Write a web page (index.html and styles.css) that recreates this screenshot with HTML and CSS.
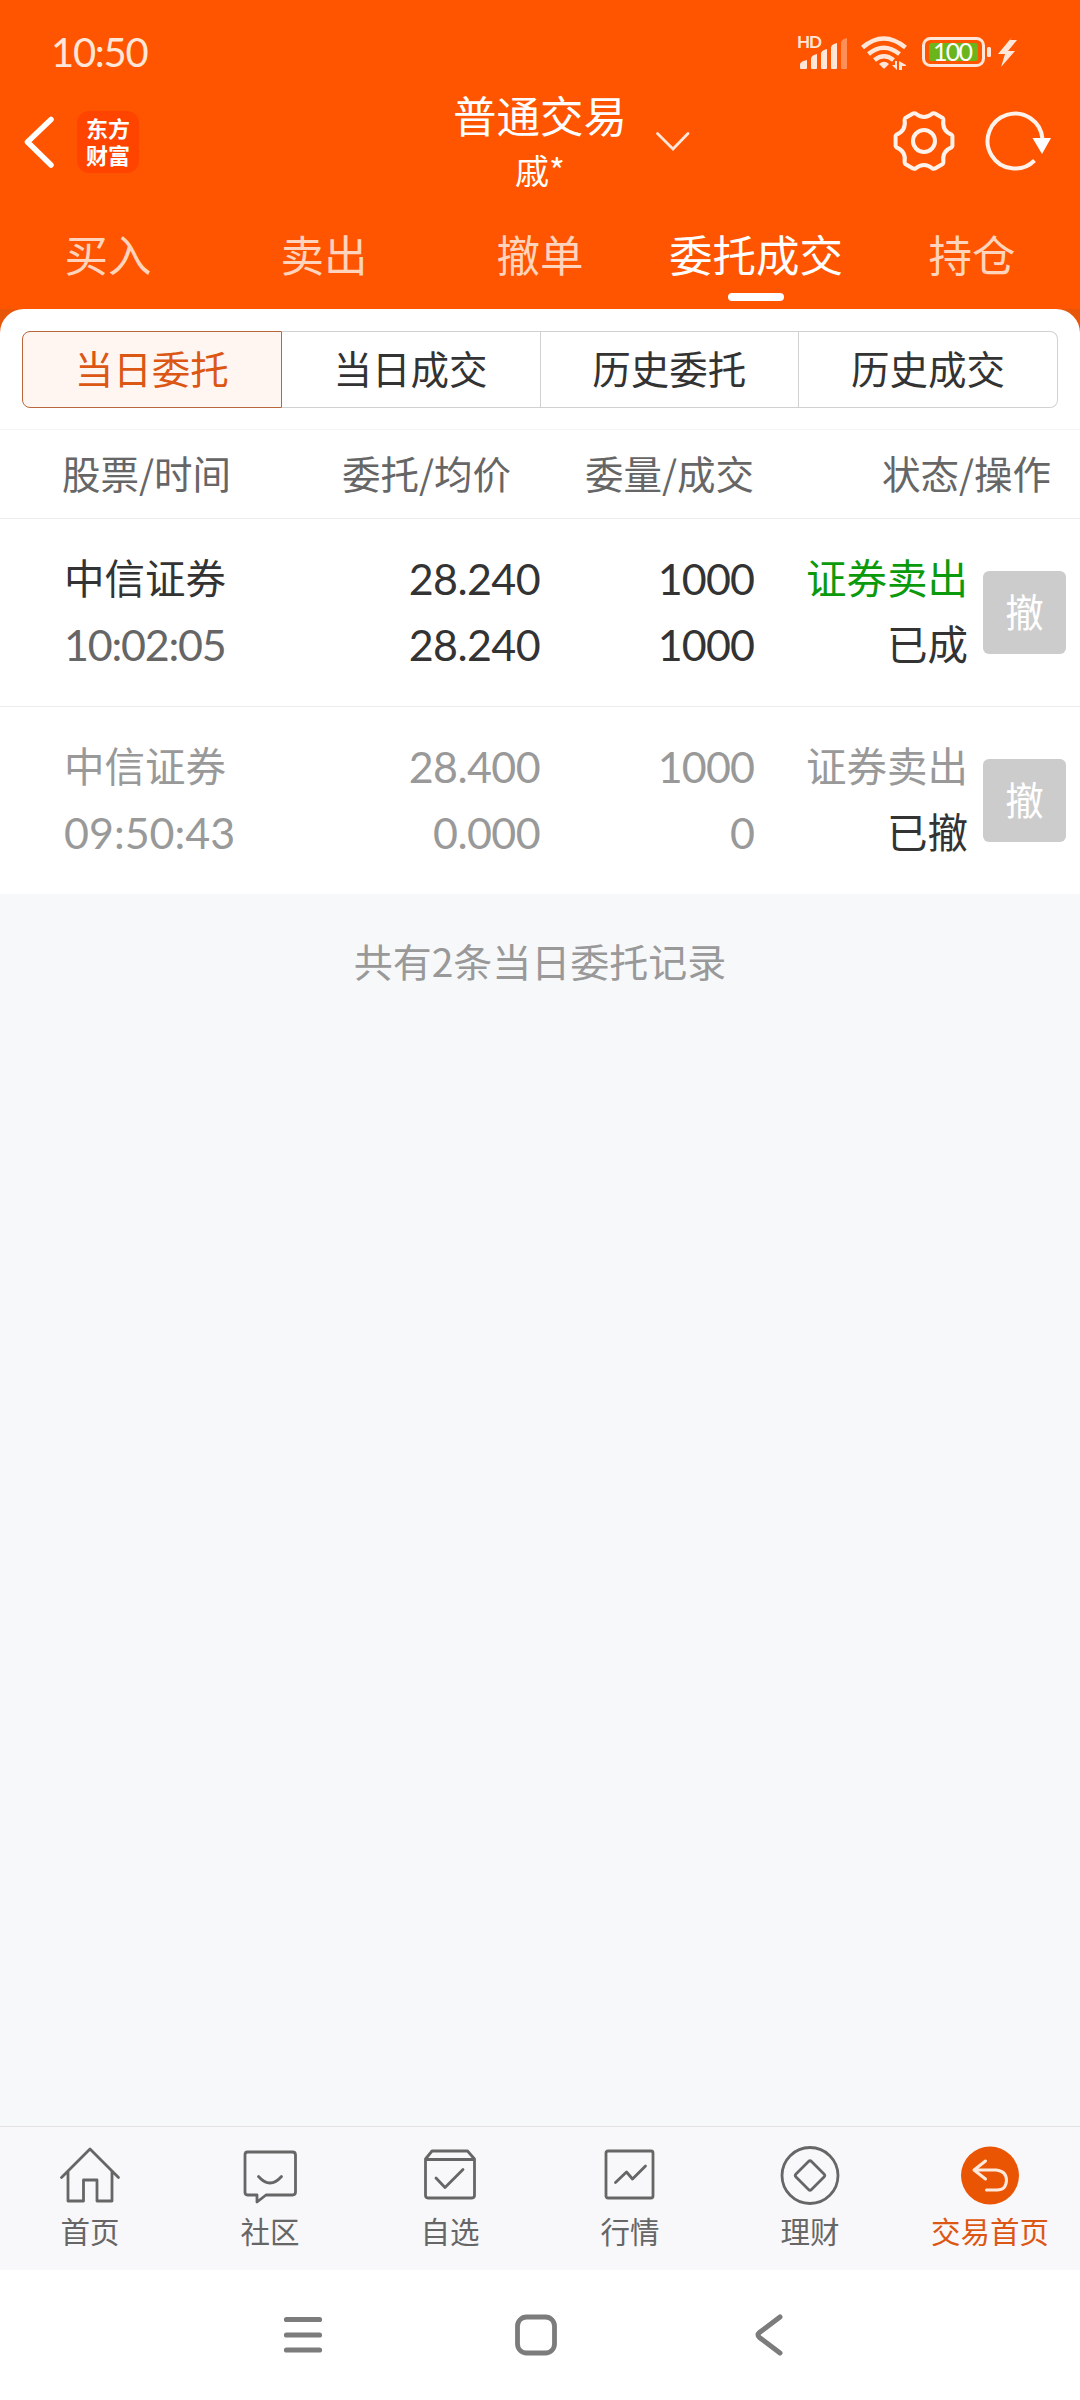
FILE: index.html
```html
<!DOCTYPE html>
<html lang="zh-CN">
<head>
<meta charset="UTF-8">
<meta name="viewport" content="width=device-width, initial-scale=1.0">
<title>普通交易 - 委托成交</title>
<link rel="stylesheet" href="styles.css">
</head>
<body>

<div class="page">
    <header class="header">
        <div class="status-bar">
            <span class="clock">10:50</span>
            <svg class="status-icons" width="222" height="40" viewBox="796 32 222 40">
                <text class="hd" x="797" y="48" textLength="25">HD</text>
                <g fill="#ffe6d8">
                    <path d="M800 68v-4q1-3 7-4v8q0 1-1 1h-5q-1 0-1-1z"/>
                    <path d="M811 68v-10q1-3 6-4v14q0 1-1 1h-4q-1 0-1-1z"/>
                    <path d="M821 68v-15q1-3 6-4v19q0 1-1 1h-4q-1 0-1-1z"/>
                    <path d="M831 68v-21q1-3 6-4v25q0 1-1 1h-4q-1 0-1-1z"/>
                    <path d="M841 68v-26q1-3 6-4v30q0 1-1 1h-4q-1 0-1-1z" opacity="0.4"/>
                    <path d="M879 64q5-4.500 10 0l-4 4q-1 1-2 0z"/>
                    <path d="M892 65h3v-4h2v9zM899 70v-9l7 4v1h-4v4z"/>
                    <path d="M1012 37l-14 17h7l-4 13 14-16h-7l9-11h-7z"/>
                    <rect x="987" y="47" width="4" height="10" rx="1.500"/>
                </g>
                <g fill="none" stroke="#ffe6d8" stroke-width="4.500">
                    <path d="M862.500 47.500q21-18 43 0M868.500 54q15-12.500 31 0M874.500 60q9.500-7.500 19 0"/>
                    <rect x="923.500" y="38.500" width="60" height="27" rx="7" stroke-width="3"/>
                </g>
                <rect x="929" y="43" width="49" height="18" rx="3" fill="#6ab51c"/>
                <text class="level" x="933" y="61" textLength="40">100</text>
            </svg>
        </div>

        <div class="title-bar">
            <div class="title-left">
                <svg width="34" height="54" viewBox="0 0 34 54">
                    <path d="M28 4.500L4.500 27L28 50" fill="none" stroke="#fff" stroke-width="5.500" stroke-linecap="round" stroke-linejoin="round"/>
                </svg>
                <div class="logo">
                    <div>东方</div>
                    <div>财富</div>
                </div>
            </div>
            <div class="title-center">
                <h1>普通交易</h1>
                <div class="account">戚*</div>
                <svg class="chevron" width="36" height="22" viewBox="0 0 36 22">
                    <path d="M2.500 2.500L18 18L33 2.500" fill="none" stroke="#ffe6d8" stroke-width="2.800" stroke-linecap="round"/>
                </svg>
            </div>
            <div class="title-right">
                <svg width="64" height="64" viewBox="-32 -32 64 64">
                    <g fill="none" stroke="#fff2ea" stroke-width="4" stroke-linejoin="round">
                        <path d="M-8.500-27.500Q0-20.500 8.500-27.500Q10-28 11-27.500L18.700-23Q19.500-22 19.400-21Q17.750-10.250 27.500-6.400Q28.400-5.500 28.400-5V5Q28.400 5.500 27.500 6.400Q17.750 10.250 19.400 21Q19.500 22 18.700 23L11 27.500Q10 28 8.500 27.500Q0 20.500-8.500 27.500Q-10 28-11 27.500L-18.700 23Q-19.500 22-19.400 21Q-17.750 10.250-27.500 6.400Q-28.400 5.500-28.400 5V-5Q-28.400-5.500-27.500-6.400Q-17.750-10.250-19.400-21Q-19.500-22-18.700-23L-11-27.500Q-10-28-8.500-27.500z"/>
                        <circle r="11"/>
                    </g>
                </svg>
                <svg width="68" height="64" viewBox="-30 -32 68 64">
                    <path d="M19.500 19.500A27.500 27.500 0 1 1 27.500-2" fill="none" stroke="#fff2ea" stroke-width="4"/>
                    <path d="M17.500-3H36L27 13z" fill="#fff"/>
                </svg>
            </div>
        </div>

        <nav class="tabs">
            <span class="tab">买入</span>
            <span class="tab">卖出</span>
            <span class="tab">撤单</span>
            <span class="tab active">委托成交</span>
            <span class="tab">持仓</span>
        </nav>
    </header>

    <div class="panel-wrap">
        <div class="panel">
            <div class="segments">
                <span class="segment active">当日委托</span>
                <span class="segment">当日成交</span>
                <span class="segment">历史委托</span>
                <span class="segment">历史成交</span>
            </div>
        </div>
    </div>

    <div class="row table-head">
        <div class="col-name">股票/时间</div>
        <div class="col-price">委托/均价</div>
        <div class="col-qty">委量/成交</div>
        <div class="col-status">状态/操作</div>
    </div>

    <div class="row order">
        <div class="col-name">
            <div>中信证券</div>
            <div class="num time narrow">10:02:05</div>
        </div>
        <div class="col-price num">
            <div>28.240</div>
            <div>28.240</div>
        </div>
        <div class="col-qty num">
            <div>1000</div>
            <div>1000</div>
        </div>
        <div class="col-status">
            <div class="sell">证券卖出</div>
            <div>已成</div>
        </div>
        <span class="cancel">撤</span>
    </div>

    <div class="row order cancelled">
        <div class="col-name">
            <div>中信证券</div>
            <div class="num time">09:50:43</div>
        </div>
        <div class="col-price num">
            <div>28.400</div>
            <div>0.000</div>
        </div>
        <div class="col-qty num">
            <div>1000</div>
            <div>0</div>
        </div>
        <div class="col-status">
            <div>证券卖出</div>
            <div class="state">已撤</div>
        </div>
        <span class="cancel">撤</span>
    </div>

    <main class="summary">共有2条当日委托记录</main>

    <nav class="bottom-tabs">
        <div class="item">
            <svg class="icon" width="64" height="64" viewBox="0 0 64 64">
                <path d="M3.500 33.500L32 5L60.500 33.500M10 28V57H25.500V36H39V57H54V28"/>
            </svg>
            <span>首页</span>
        </div>
        <div class="item">
            <svg class="icon" width="64" height="64" viewBox="0 0 64 64">
                <path d="M9.500 8H54.500Q57.500 8 57.500 11V48Q57.500 51 54.500 51H28L19 58V51H9.500Q7 51 7 48V11Q7 8 9.500 8z"/>
                <path d="M20.500 32.500Q32 45.500 43.500 32.500"/>
            </svg>
            <span>社区</span>
        </div>
        <div class="item">
            <svg class="icon" width="64" height="64" viewBox="0 0 64 64">
                <path d="M7.500 15L14 7H49.500L56.500 15V51Q56.500 54 54 54H10Q7.500 54 7.500 51zM7.500 15.500H56.500M18 34L27 43.500L45 25.500"/>
            </svg>
            <span>自选</span>
        </div>
        <div class="item">
            <svg class="icon" width="64" height="64" viewBox="0 0 64 64">
                <rect x="8" y="7" width="47" height="47" rx="2"/>
                <path d="M17.500 38.500L28.500 28L34.500 35L47.500 22"/>
            </svg>
            <span>行情</span>
        </div>
        <div class="item">
            <svg class="icon" width="64" height="64" viewBox="0 0 64 64">
                <circle cx="32" cy="31.500" r="28"/>
                <path d="M30.500 17.500Q32 16 33.500 17.500L46 30Q47.500 31.500 46 33L33.500 45.500Q32 47 30.500 45.500L18 33Q16.500 31.500 18 30z"/>
            </svg>
            <span>理财</span>
        </div>
        <div class="item active">
            <svg class="icon" width="64" height="64" viewBox="0 0 64 64">
                <circle class="disc" cx="32" cy="31.500" r="29"/>
                <path class="arrow" d="M27.500 17L16 26L27.500 35M16 26H38Q48.500 27 48.500 36.500Q48 46 39 46H28.500"/>
            </svg>
            <span>交易首页</span>
        </div>
    </nav>

    <footer class="system-nav">
        <svg width="44" height="44" viewBox="0 0 44 44">
            <path d="M5.500 6.500H38.500M5.500 22H38.500M5.500 37H38.500" stroke-width="5.200"/>
        </svg>
        <svg width="44" height="44" viewBox="0 0 44 44">
            <rect x="3.500" y="4" width="37" height="36" rx="9" stroke-width="4.800"/>
        </svg>
        <svg width="44" height="44" viewBox="0 0 44 44">
            <path d="M33 4L12.500 19.500Q9.500 22 12.500 24.500L33 40" stroke-width="5"/>
        </svg>
    </footer>
</div>

</body>
</html>
```

FILE: styles.css
```css
* {
    box-sizing: border-box;
}

body {
    font-family: "Noto Sans CJK SC", sans-serif;
    background-color: #f7f8fa;
    color: #333;
    margin: 0;
    padding: 0;
}

svg {
    display: block;
    flex: none;
}

.page {
    display: flex;
    flex-direction: column;
    width: 1080px;
    height: 2400px;
}

/* Header */
.header {
    height: 309px;
    background-color: #ff5500;
    color: #fff;
}

.status-bar {
    display: flex;
    justify-content: space-between;
    height: 92px;
    padding: 32px 62px 0 51px;
}

.clock {
    font-family: Lato, sans-serif;
    font-size: 40px;
    line-height: 41px;
    letter-spacing: -1.3px;
    color: #ffe6d8;
}

.hd {
    font-family: Lato, sans-serif;
    font-size: 17px;
    font-weight: bold;
    fill: #ffe6d8;
}

.level {
    font-family: Lato, sans-serif;
    font-size: 25px;
    fill: #fff;
}

.title-bar {
    display: grid;
    grid-template-columns: 1fr 240px 1fr;
    height: 114px;
}

.title-left {
    display: flex;
    align-items: center;
    gap: 20px;
    height: 100px;
    padding-left: 23px;
}

.logo {
    width: 62px;
    height: 62px;
    padding-top: 4px;
    border-radius: 12px;
    background-color: #ff4400;
    font-family: Lato, "Noto Sans CJK SC", sans-serif;
    font-size: 22px;
    font-weight: 700;
    line-height: 27px;
    text-align: center;
}

.title-center {
    position: relative;
    text-align: center;
}

.title-center h1 {
    margin: 0;
    font-size: 43.5px;
    font-weight: 400;
    line-height: 46px;
}

.account {
    font-size: 34px;
    line-height: 63px;
}

.chevron {
    position: absolute;
    left: 235px;
    top: 39px;
}

.title-right {
    display: flex;
    justify-content: flex-end;
    align-items: center;
    gap: 29px;
    height: 98px;
    padding-right: 27px;
}

.tabs {
    display: flex;
    height: 103px;
}

.tab {
    display: flex;
    flex: 1;
    flex-direction: column;
    align-items: center;
    font-size: 43.5px;
    line-height: 96px;
    color: #ffd3bc;
}

.tab.active {
    color: #fff;
}

.tab.active::after {
    content: "";
    width: 56px;
    height: 8px;
    margin-top: -9px;
    border-radius: 4px;
    background-color: #fff;
}

/* Order type switch */
.panel-wrap {
    height: 120px;
    background-color: #e8560a;
}

.panel {
    height: 120px;
    padding: 22px 22px 0;
    border-radius: 24px 24px 0 0;
    background-color: #fff;
}

.segments {
    display: flex;
    height: 77px;
}

.segment {
    flex: 1;
    border: 1px solid #cfd1d3;
    border-left-width: 0;
    font-size: 38.5px;
    line-height: 71px;
    text-align: center;
}

.segment.active {
    border: 1px solid #b8663c;
    border-radius: 8px 0 0 8px;
    background-color: #fff6f2;
    color: #dc5714;
}

.segment:last-child {
    border-radius: 0 8px 8px 0;
}

/* Orders */
.row {
    display: flex;
    background-color: #fff;
}

.table-head {
    height: 90px;
    border-top: 1px solid #f5f5f5;
    border-bottom: 1px solid #ececec;
    font-size: 38.5px;
    line-height: 85px;
    color: #666;
}

.col-name {
    width: 264px;
    padding-left: 64px;
}

.col-price {
    width: 276px;
    text-align: right;
}

.col-qty {
    width: 214px;
    text-align: right;
}

.col-status {
    width: 214px;
    text-align: right;
}

.table-head .col-name {
    padding-left: 62px;
}

.table-head .col-price {
    padding-right: 29px;
}

.table-head .col-status {
    width: 297px;
}

.order {
    height: 188px;
    padding-top: 25px;
    border-bottom: 1px solid #ececec;
    font-size: 40.5px;
    line-height: 66px;
}

.order.cancelled {
    height: 187px;
    border-bottom: none;
    color: #999;
}

.num {
    font-family: Lato, sans-serif;
    font-size: 43px;
    line-height: 66px;
    letter-spacing: -0.6px;
}

.col-price.num,
.col-qty.num {
    padding-top: 2px;
}

.col-qty.num {
    letter-spacing: -0.9px;
}

.time {
    padding-top: 2px;
    letter-spacing: 0;
    color: #666;
}

.time.narrow {
    letter-spacing: -1.2px;
}

.cancelled .time {
    color: #999;
}

.sell {
    color: #0b9a0b;
}

.state {
    color: #333;
}

.cancel {
    width: 83px;
    height: 83px;
    margin: 27px 0 0 15px;
    border-radius: 6px;
    background-color: #ccc;
    color: #fff;
    font-size: 38.5px;
    line-height: 78px;
    text-align: center;
}

.summary {
    flex: 1;
    padding-top: 38px;
    font-size: 39px;
    line-height: 57px;
    color: #999;
    text-align: center;
}

/* Bottom navigation */
.bottom-tabs {
    display: flex;
    height: 144px;
    border-top: 1px solid #e2e2e4;
    background-color: #f8f8fa;
}

.item {
    display: flex;
    flex: 1;
    flex-direction: column;
    align-items: center;
    padding-top: 17px;
    font-size: 29.5px;
    line-height: 45px;
    color: #666;
}

.icon {
    fill: none;
    stroke: #666;
    stroke-width: 2.8;
    stroke-linecap: round;
    stroke-linejoin: round;
}

.item.active {
    color: #dc5714;
}

.disc {
    fill: #ea5504;
    stroke: none;
}

.arrow {
    stroke: #ffe9dc;
    stroke-width: 3;
}

.system-nav {
    display: flex;
    justify-content: center;
    gap: 189px;
    height: 130px;
    padding: 43px 8px 0 0;
    background-color: #fff;
}

.system-nav svg {
    fill: none;
    stroke: #7c7c7c;
    stroke-linecap: round;
}
```
